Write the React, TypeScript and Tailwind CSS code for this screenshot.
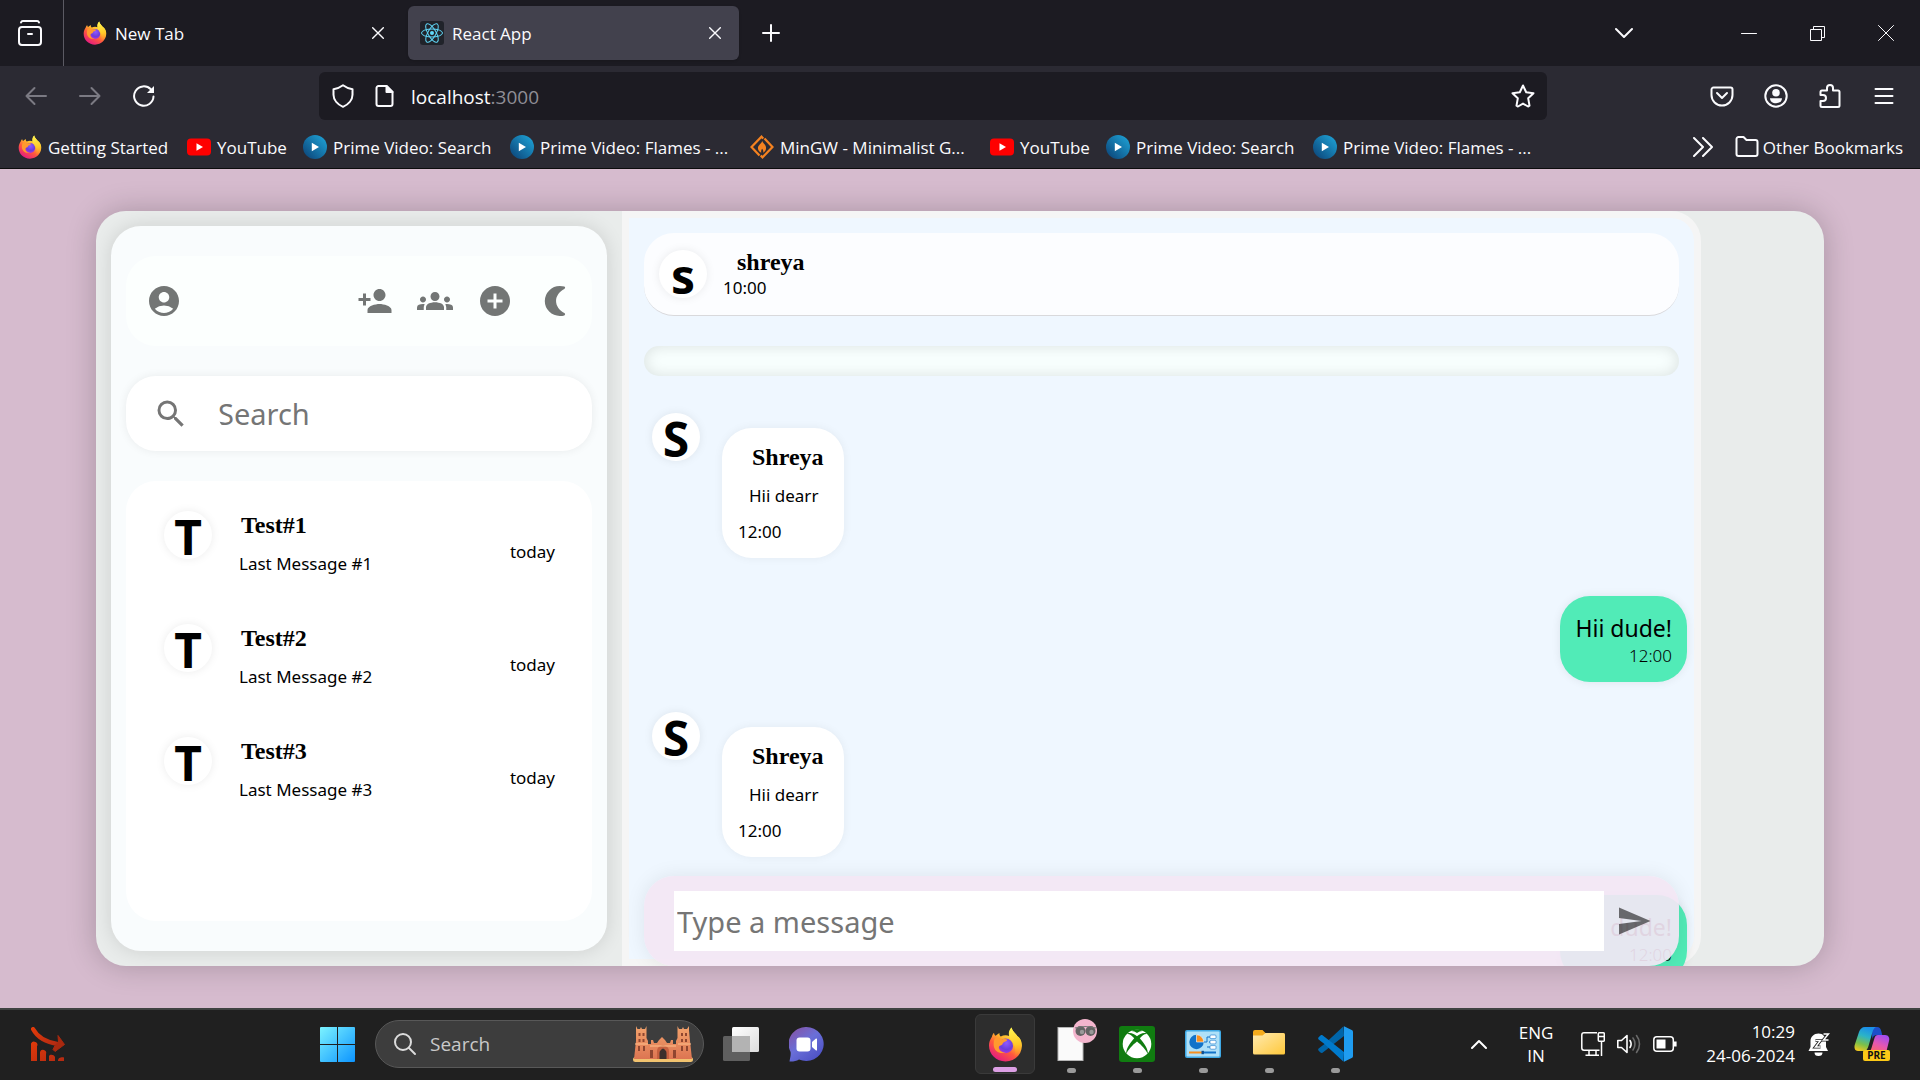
import type { ReactNode } from "react";
import { MdAccountCircle, MdAddCircle, MdGroups, MdPersonAdd, MdSearch, MdSend } from "react-icons/md";

/* ---------- Logos ---------- */

function FirefoxLogo({ id, className }: { id: string; className: string }) {
  return (
    <svg viewBox="0 0 32 32" className={className} aria-hidden="true">
      <defs>
        <linearGradient id={id + "b"} x1="0.8" y1="0.1" x2="0.25" y2="1">
          <stop offset="0" stopColor="#fff44f" />
          <stop offset="0.35" stopColor="#ffb62b" />
          <stop offset="0.6" stopColor="#ff5a3c" />
          <stop offset="1" stopColor="#e31587" />
        </linearGradient>
        <linearGradient id={id + "y"} x1="0.4" y1="0" x2="0.5" y2="1">
          <stop offset="0" stopColor="#fff44f" />
          <stop offset="0.6" stopColor="#ffc928" />
          <stop offset="1" stopColor="#ff7a2a" stopOpacity="0.2" />
        </linearGradient>
        <radialGradient id={id + "p"} cx="0.55" cy="0.3" r="0.75">
          <stop offset="0" stopColor="#9059ff" />
          <stop offset="0.6" stopColor="#6a3ddb" />
          <stop offset="1" stopColor="#b833e1" />
        </radialGradient>
      </defs>
      <path d="M3.6 8.8c.3-1.600 1-2.800 1.900-3.600.1 1.300.6 2 1.300 2.800 1-.9 2.200-1.500 3.700-2.600-.2 1.400.1 2.400 1.200 3.300 2.300-1.300 5.400-1.500 7.700-.4C18.500 5.200 19.300 2.600 21.600.5c.5 3.300 3.400 4.900 5.300 7.900 2.300.9 4.300 5 4.100 8.700C30.800 25.300 24.400 31.500 16 31.500S.9 25.200.9 17c0-3 .9-5.600 2.700-8.200z" fill={`url(#${id}b)`} />
      <path d="M21.600.5c.5 3.300 3.400 4.900 5.300 7.900 2.400 2 3.900 5.300 3.600 9.200-.6 4.600-3 7.700-6.800 9.600 1.800-3.600 1.700-8.600-.4-12.200-1.700-2.200-3.700-3.500-3.900-6.700-.1-3 .7-6 2.200-7.800z" fill={`url(#${id}y)`} />
      <circle cx="16.200" cy="17.300" r="6.700" fill={`url(#${id}p)`} />
      <path d="M6.300 10.500c2.200-.8 4.700-.5 6.300.9 1.600-.6 4.200-.6 5 .3-.3 1.300-1.800 1.700-3.400 2.400-.9.5-.7 1.700-1.700 2.300-1.300.7-2.200.5-2.700 2.200.3 3.100 3.100 5 6.400 4.500-4.900 2.300-10.600-1.100-11-6.300-.1-2.700.1-4.700 1.100-6.300z" fill="#ff9a2e" />
    </svg>
  );
}

function ReactLogo() {
  return (
    <svg viewBox="0 0 24 24" className="size-6 shrink-0" aria-hidden="true">
      <rect width="24" height="24" rx="3" fill="#20232a" />
      <g fill="none" stroke="#61dafb" strokeWidth="1">
        <ellipse cx="12" cy="12" rx="10.500" ry="4" />
        <ellipse cx="12" cy="12" rx="10.500" ry="4" transform="rotate(60 12 12)" />
        <ellipse cx="12" cy="12" rx="10.500" ry="4" transform="rotate(120 12 12)" />
      </g>
      <circle cx="12" cy="12" r="2" fill="#61dafb" />
    </svg>
  );
}

function YouTubeLogo() {
  return (
    <svg viewBox="0 0 24 24" className="size-6 shrink-0" aria-hidden="true">
      <rect y="3.500" width="24" height="17" rx="4" fill="#f00" />
      <path d="M9.500 8.200 16 12l-6.500 3.800z" fill="#fff" />
    </svg>
  );
}

function PrimeLogo({ id }: { id: string }) {
  return (
    <svg viewBox="0 0 24 24" className="size-6 shrink-0" aria-hidden="true">
      <defs>
        <linearGradient id={id} x1="1" y1="0" x2="0" y2="1">
          <stop offset="0" stopColor="#1fa8dc" />
          <stop offset="1" stopColor="#0b3f73" />
        </linearGradient>
      </defs>
      <circle cx="12" cy="12" r="12" fill={`url(#${id})`} />
      <path d="M8.800 7.800 16 12l-7.200 4.200z" fill="#fff" />
    </svg>
  );
}

function MinGWLogo() {
  return (
    <svg viewBox="0 0 24 24" className="size-6 shrink-0" fill="none" aria-hidden="true">
      <path d="M9.500 20.600 1.500 12 11.500 1.700l1.800 1.900" stroke="#f58220" strokeWidth="2.200" />
      <path d="M14.500 3.400 22.500 12 12.500 22.300l-1.800-1.900" stroke="#f58220" strokeWidth="2.200" />
      <path d="M12.200 5.800c.4 2.200 3.900 4 3.900 7.200 0 2.400-1.600 4-3 4.700.5-1.600.1-2.800-1-4-.9 1.200-1.200 2.500-.8 4-1.800-.6-3.400-2.300-3.400-4.600 0-3.200 3.900-4.300 4.300-7.300z" fill="#f58220" />
    </svg>
  );
}

/* ---------- Line icons ---------- */

function Line({ className, box = 24, width = 2, children }: { className: string; box?: number; width?: number; children: ReactNode }) {
  return (
    <svg viewBox={`0 0 ${box} ${box}`} className={className} fill="none" stroke="currentColor" strokeWidth={width} strokeLinecap="round" strokeLinejoin="round" aria-hidden="true">
      {children}
    </svg>
  );
}

function MoonIcon() {
  return (
    <svg viewBox="0 0 24 24" className="size-9" fill="currentColor" aria-hidden="true">
      <path d="M15.200 2a10 10 0 1 0 0 20c1.200 0 2.200-.1 3-.4.8-.4.700-1.200 0-1.600-3.200-1.700-5.500-4.600-5.500-8s2.300-6.300 5.500-8c.7-.4.800-1.200 0-1.600-.8-.3-1.800-.4-3-.4z" />
    </svg>
  );
}

/* ---------- Browser chrome ---------- */

function Tab({ icon, title, active }: { icon: ReactNode; title: string; active?: boolean }) {
  return (
    <div className={active ? "flex h-[54px] w-[331px] items-center rounded-md bg-[#42414d] px-3 shadow" : "flex h-[54px] w-[331px] items-center px-3"}>
      {icon}
      <span className="ml-2 flex-1 pt-px text-[17px]">{title}</span>
      <button aria-label={`Close ${title}`} className="flex size-6 items-center justify-center">
        <Line className="size-3" box={12} width={1.4}><path d="m.7.7 10.600 10.600M11.300.7.7 11.300" /></Line>
      </button>
    </div>
  );
}

function TabBar() {
  return (
    <div className="flex h-[66px] items-center bg-[#1c1b22]">
      <button aria-label="Recent browsing" className="flex h-full w-16 items-center justify-center border-r border-[#5b5a63] pr-1">
        <Line className="size-7" box={28} width={2}>
          <path d="M5 3.500a2 2 0 0 1 2-1.500h14a2 2 0 0 1 2 1.500" />
          <rect x="3" y="8" width="22" height="18" rx="3" />
          <path d="M12 15h4" />
        </Line>
      </button>
      <div className="ml-[7px] flex gap-1.5">
        <Tab icon={<FirefoxLogo id="fxTab" className="size-6" />} title="New Tab" />
        <Tab icon={<ReactLogo />} title="React App" active />
      </div>
      <button aria-label="Open a new tab" className="ml-[22px] p-px">
        <Line className="size-[18px]" box={18} width={2}><path d="M9 1v16M1 9h16" /></Line>
      </button>
      <div className="ml-auto flex items-center">
        <button aria-label="List all tabs" className="mr-[108px]">
          <Line className="size-[18px]" box={18} width={2}><path d="m1 5 8 8 8-8" /></Line>
        </button>
        <button aria-label="Minimize" className="flex w-[69px] justify-start">
          <Line className="size-4" box={16} width={1}><path d="M.5 8.500h15" /></Line>
        </button>
        <button aria-label="Restore" className="flex w-[68px] justify-start">
          <svg viewBox="0 0 15 15" className="size-[15px]" fill="none" stroke="currentColor" aria-hidden="true">
            <path d="M.5 3.500h11v11H.5zM3.500 3.500v-3h11v11h-3" />
          </svg>
        </button>
        <button aria-label="Close window" className="mr-[26px]">
          <Line className="size-4" box={16} width={1}><path d="m.5.5 15 15m0-15-15 15" /></Line>
        </button>
      </div>
    </div>
  );
}

function NavBar() {
  return (
    <div className="flex h-[60px] items-center">
      <div className="flex w-[319px] shrink-0 items-center gap-[30px] pl-6">
        <button aria-label="Back" className="text-[#7b7a83]">
          <Line className="size-6"><path d="M22 12H2.500M10.500 4l-8 8 8 8" /></Line>
        </button>
        <button aria-label="Forward" className="text-[#7b7a83]">
          <Line className="size-6"><path d="M2 12h19.500M13.500 4l8 8-8 8" /></Line>
        </button>
        <button aria-label="Reload">
          <Line className="size-6">
            <path d="M21.500 12.500A9.700 9.700 0 1 1 18.800 5.300" />
            <path d="M22 2v7h-7z" fill="currentColor" stroke="none" />
          </Line>
        </button>
      </div>
      <div className="flex h-12 flex-1 items-center rounded-md bg-[#1c1b22] px-3">
        <Line className="size-6 shrink-0"><path d="M12 1.200c3.500 2.600 6.300 3.500 9.500 4v5.600c0 5.200-4.200 9.800-9.500 12-5.300-2.200-9.500-6.800-9.500-12V5.200c3.200-.5 6-1.400 9.500-4z" /></Line>
        <Line className="ml-[18px] size-6 shrink-0">
          <path d="M5.500 2h8l6 6v12a2 2 0 0 1-2 2h-12a2 2 0 0 1-2-2V4a2 2 0 0 1 2-2z" />
          <path d="M13.500 2v6h6z" fill="currentColor" />
        </Line>
        <label className="relative ml-[14px] flex-1 text-[19px]">
          <span className="pointer-events-none absolute inset-y-0 left-0 flex items-center pt-0.5">
            <span>localhost</span>
            <span className="text-[#8f8e96]">:3000</span>
          </span>
          <input aria-label="Address" defaultValue="" className="block w-full bg-transparent outline-none" />
        </label>
        <button aria-label="Bookmark this page">
          <Line className="size-6"><path d="m12 1.500 3.200 6.700 7.300 1-5.300 5.100 1.300 7.400-1.500.8-5-2.900-5 2.900-1.500-.8 1.300-7.400-5.300-5.100 7.300-1z" /></Line>
        </button>
      </div>
      <div className="flex w-[373px] shrink-0 items-center justify-end gap-[30px] pr-6">
        <button aria-label="Save to Pocket">
          <Line className="size-6"><path d="M3.500 3.500h17a2 2 0 0 1 2 2V11a10.500 10.500 0 0 1-21 0V5.500a2 2 0 0 1 2-2z" /><path d="m7 9 5 5 5-5" /></Line>
        </button>
        <button aria-label="Account">
          <Line className="size-6">
            <circle cx="12" cy="12" r="10.700" />
            <circle cx="12" cy="8.800" r="3.800" fill="currentColor" stroke="none" />
            <path d="M6 14.200h12c0 3-2.500 5-6 5s-6-2-6-5z" fill="currentColor" stroke="none" />
          </Line>
        </button>
        <button aria-label="Extensions">
          <Line className="size-6"><path d="M4 23a1.500 1.500 0 0 1-1.500-1.500V17H5a3 3 0 0 0 0-6H2.500V8A1.500 1.500 0 0 1 4 6.500h5V4a3 3 0 0 1 6 0v2.500h5A1.500 1.500 0 0 1 21.500 8v13.500A1.500 1.500 0 0 1 20 23z" /></Line>
        </button>
        <button aria-label="Open application menu">
          <Line className="size-6"><path d="M3.500 5h17M3.500 12h17M3.500 19h17" /></Line>
        </button>
      </div>
    </div>
  );
}

const bookmarks = [
  { icon: <FirefoxLogo id="fxBm" className="size-6 shrink-0" />, label: "Getting Started", width: "w-[169px]" },
  { icon: <YouTubeLogo />, label: "YouTube", width: "w-[116px]" },
  { icon: <PrimeLogo id="pv1" />, label: "Prime Video: Search", width: "w-[207px]" },
  { icon: <PrimeLogo id="pv2" />, label: "Prime Video: Flames - ...", width: "w-[240px]" },
  { icon: <MinGWLogo />, label: "MinGW - Minimalist G...", width: "w-[240px]" },
  { icon: <YouTubeLogo />, label: "YouTube", width: "w-[116px]" },
  { icon: <PrimeLogo id="pv3" />, label: "Prime Video: Search", width: "w-[207px]" },
  { icon: <PrimeLogo id="pv4" />, label: "Prime Video: Flames - ...", width: "w-[240px]" },
];

function BookmarkBar() {
  return (
    <nav aria-label="Bookmarks" className="flex h-[43px] items-center border-b border-[#0c0c0d] pl-[18px] text-[17px] whitespace-nowrap">
      {bookmarks.map((b, i) => (
        <a key={i} href="#" className={`flex shrink-0 items-center gap-1.5 ${b.width}`}>
          {b.icon}
          <span className="pt-px">{b.label}</span>
        </a>
      ))}
      <button aria-label="More bookmarks" className="ml-auto">
        <Line className="size-5" box={20} width={2}><path d="m1 1 9 9-9 9M10 1l9 9-9 9" /></Line>
      </button>
      <a href="#" className="ml-[22px] flex items-center gap-1 pr-[17px]">
        <Line className="size-6"><path d="M3.500 2h5l3 3h9a2 2 0 0 1 2 2v12a2 2 0 0 1-2 2h-17a2 2 0 0 1-2-2V4a2 2 0 0 1 2-2z" /></Line>
        <span className="pt-px">Other Bookmarks</span>
      </a>
    </nav>
  );
}

/* ---------- Chat application ---------- */

function Avatar({ letter }: { letter: string }) {
  return (
    <div className="size-12 shrink-0 rounded-full bg-white text-center text-[48px] leading-[51px] font-bold shadow-[0_0_10px_rgba(0,0,0,0.08)]">
      {letter}
    </div>
  );
}

function IconButton({ label, children }: { label: string; children: ReactNode }) {
  return (
    <button aria-label={label} className="flex size-[60px] items-center justify-center rounded-full">
      {children}
    </button>
  );
}

const conversations = [
  { name: "Test#1", last: "Last Message #1", when: "today" },
  { name: "Test#2", last: "Last Message #2", when: "today" },
  { name: "Test#3", last: "Last Message #3", when: "today" },
];

function Sidebar() {
  return (
    <aside className="m-[15px] flex w-[496px] shrink-0 flex-col gap-[30px] rounded-[30px] bg-[#f9fcfd] px-[15px] py-[30px] shadow-[0_0_20px_rgba(0,0,0,0.12)]">
      <div className="flex justify-between rounded-[30px] bg-[#fcfffe] py-[15px] pr-[7px] pl-2 text-[#737675]">
        <IconButton label="Account"><MdAccountCircle className="size-9" /></IconButton>
        <div className="flex">
          <IconButton label="Add person"><MdPersonAdd className="size-9" /></IconButton>
          <IconButton label="Create group"><MdGroups className="size-9" /></IconButton>
          <IconButton label="New chat"><MdAddCircle className="size-9" /></IconButton>
          <IconButton label="Dark mode"><MoonIcon /></IconButton>
        </div>
      </div>
      <label className="flex h-[75px] items-center rounded-[30px] bg-white pl-[27px] shadow-[0_0_10px_rgba(0,0,0,0.07)]">
        <MdSearch className="size-9 shrink-0 text-[#757575]" />
        <input aria-label="Search" placeholder="Search" className="ml-[29px] w-full min-w-0 rounded-[30px] text-[29px] outline-none placeholder:text-[#757575]" />
      </label>
      <ul className="flex-1 rounded-[30px] bg-white pt-[30px] pr-[37px] pl-[38px]">
        {conversations.map((c) => (
          <li key={c.name} className="flex h-[113px]">
            <Avatar letter={c.name[0]} />
            <div className="ml-[27px] flex-1">
              <div className="ml-0.5 font-[Liberation_Serif] text-2xl leading-7 font-bold">{c.name}</div>
              <div className="mt-[13px] text-[17px] leading-6">{c.last}</div>
            </div>
            <div className="mt-[29px] text-[17px] leading-6">{c.when}</div>
          </li>
        ))}
      </ul>
    </aside>
  );
}

function Received() {
  return (
    <div className="mt-[30px] flex gap-[22px]">
      <Avatar letter="S" />
      <div className="mt-[15px] h-[130px] rounded-[30px] bg-white pt-[15px] pr-5 pl-4 shadow-[0_0_10px_rgba(0,0,0,0.06)]">
        <div className="pl-[14px] font-[Liberation_Serif] text-2xl leading-7 font-bold">Shreya</div>
        <div className="mt-[13px] pl-[11px] text-[17px] leading-6">Hii dearr</div>
        <div className="mt-3 text-[17px] leading-6">12:00</div>
      </div>
    </div>
  );
}

function Sent() {
  return (
    <div className="mt-[38px] ml-auto h-[86px] w-fit rounded-[30px] bg-[#51ebb7] px-[15px] pt-4 text-right shadow-[0_0_10px_rgba(0,0,0,0.08)]">
      <div className="text-[23px] leading-8">Hii dude!</div>
      <div className="text-[17px] leading-6 font-light">12:00</div>
    </div>
  );
}

function ChatArea() {
  return (
    <section className="relative min-w-0 flex-1 rounded-r-[30px] border-[7px] border-[#f5f5f5] bg-[#eff7ff]">
      <header className="mx-[15px] mt-[15px] flex h-[83px] items-center gap-4 rounded-[30px] border-b border-[#d9d9dc] bg-[#fcfdff] px-[15px]">
        <Avatar letter="s" />
        <div>
          <div className="pl-[14px] font-[Liberation_Serif] text-2xl leading-7 font-bold">shreya</div>
          <div className="text-[17px] leading-6">10:00</div>
        </div>
      </header>
      <div className="mx-[15px] mt-[30px] h-[30px] rounded-[15px] bg-[#f8fffe] shadow-[inset_0_0_15px_rgba(0,0,0,0.12)]" />
      <div className="flex flex-col pt-[7px] pr-[7px] pl-[23px]">
        <Received />
        <Sent />
        <Received />
        <Sent />
      </div>
      <form className="absolute inset-x-[15px] -bottom-[7px] flex h-[90px] items-center rounded-[30px] bg-[#f3e6f4]/92 pr-[15px] pl-[30px] shadow-[0_0_20px_rgba(0,0,0,0.08)]" onSubmit={(e) => e.preventDefault()}>
        <input aria-label="Type a message" placeholder="Type a message" className="h-[60px] min-w-0 flex-1 bg-white px-[3px] text-[29px] outline-none placeholder:text-[#757575]" />
        <button aria-label="Send" className="flex size-[60px] items-center justify-center text-black/55">
          <MdSend className="size-9" />
        </button>
      </form>
    </section>
  );
}

function ChatWindow() {
  return (
    <main className="flex min-h-0 flex-1 flex-col bg-[#d6bbce] px-[5%] py-[42px] font-['Noto_Sans',sans-serif] text-black">
      <div className="flex min-h-0 flex-1 overflow-hidden rounded-[30px] bg-[#e9eceb] pr-[123px] shadow-[0_0_30px_rgba(0,0,0,0.22)]">
        <Sidebar />
        <ChatArea />
      </div>
    </main>
  );
}

/* ---------- Taskbar ---------- */

function TrendIcon() {
  return (
    <svg viewBox="0 0 34 34" className="size-[34px]" aria-hidden="true">
      <defs>
        <linearGradient id="trend" x1="0" y1="0" x2="1" y2="1">
          <stop offset="0" stopColor="#e03a0a" />
          <stop offset="1" stopColor="#b32a12" />
        </linearGradient>
      </defs>
      <path d="M2 2C6 9.500 13 15 27 17" stroke="url(#trend)" strokeWidth="4.200" fill="none" strokeLinecap="round" />
      <path d="M27 8.500 33.500 17.500 24 24.500 22 22.500 24 18.500 27.500 15z" fill="#a9290f" stroke="#a9290f" strokeLinejoin="round" />
      <path d="M0 16.500a3 3 0 0 1 6 3V34H0zM9 25a3 3 0 0 1 6 2v7H9zM18 29c1-2 5-1.500 6 1v4h-6zM27 34c0-3.500 3.500-4 6-3.500V34z" fill="url(#trend)" />
    </svg>
  );
}

function WindowsIcon() {
  return (
    <svg viewBox="0 0 35 35" className="size-[35px]" aria-hidden="true">
      <defs>
        <linearGradient id="win" gradientUnits="userSpaceOnUse" x1="0" y1="0" x2="35" y2="35">
          <stop offset="0" stopColor="#7cf3ff" />
          <stop offset="1" stopColor="#0c94ff" />
        </linearGradient>
      </defs>
      <path d="M1 0h16v17H0V1a1 1 0 0 1 1-1zM18 0h16a1 1 0 0 1 1 1v16H18zM0 18h17v17H1a1 1 0 0 1-1-1zM18 18h17v16a1 1 0 0 1-1 1H18z" fill="url(#win)" />
    </svg>
  );
}

function CastleIcon() {
  return (
    <svg viewBox="0 0 60 36" className="h-9 w-[60px]" aria-hidden="true">
      <defs>
        <linearGradient id="castle" x1="0" y1="0" x2="0" y2="1">
          <stop offset="0" stopColor="#f3a36c" />
          <stop offset="1" stopColor="#dd7552" />
        </linearGradient>
      </defs>
      <rect y="31" width="60" height="5" rx="2.500" fill="#f2c36f" />
      <path d="M3 4V0l1.500 3H7l1-2 1 2h3l1.500-3v12l1.500 3v3h3v-4h2l1 3h3l2-3 3-3 3 3 2 3h3l1-3h2v4h3v-3l1.500-3V0L46 3h3l1-2 1 2h3l2-3v4l1 11 2 18H1L3 15z" fill="url(#castle)" />
      <path d="M24 33V25c0-3 2-5 6-6 4 1 6 3 6 6v8z" fill="#c5603f" />
      <path d="M26.500 33v-6c0-2 1.500-3.500 3.500-4.500 2 1 3.500 2.500 3.500 4.500v6z" fill="#3a302c" />
      <path d="M5.500 7h2v3h-2zM9.500 7h2v3h-2zM5.500 13h2v3h-2zM9.500 13h2v3h-2zM5 20h2v5H5zM10 20h2v5h-2zM48 7h2v3h-2zM52 7h2v3h-2zM48 13h2v3h-2zM52 13h2v3h-2zM48 20h2v5h-2zM53 20h2v5h-2zM17 24h3v8h-3zM40 24h3v8h-3z" fill="#8f4630" />
      <path d="M2 18h13M45 18h13M17 20h26" stroke="#ffc08c" strokeWidth="1" />
    </svg>
  );
}

function TaskViewIcon() {
  return (
    <svg viewBox="0 0 36 34" className="h-[34px] w-9" aria-hidden="true">
      <defs>
        <linearGradient id="tv" x1="0" y1="0" x2="1" y2="1"><stop offset="0" stopColor="#fff" /><stop offset="1" stopColor="#dcdcdc" /></linearGradient>
      </defs>
      <rect y="9" width="27" height="25" rx="1.500" fill="#5f5f5f" />
      <rect x="9" width="27" height="25" rx="1.500" fill="url(#tv)" />
      <path d="M9 9h18v16H10.500A1.500 1.500 0 0 1 9 23.500z" fill="#b3b3b3" />
    </svg>
  );
}

function VideoChatIcon() {
  return (
    <svg viewBox="0 0 35 35" className="size-[35px]" aria-hidden="true">
      <defs>
        <linearGradient id="vc" x1="0" y1="0" x2="0.8" y2="1">
          <stop offset="0" stopColor="#8a4f9e" />
          <stop offset="0.5" stopColor="#6a6fd8" />
          <stop offset="1" stopColor="#4b4fc4" />
        </linearGradient>
      </defs>
      <path d="M17.500 0a17.500 17 0 1 1-7.500 32.500c-3 1.600-6 2.300-9.500 2C1 31 2 29 1.600 25A17.500 17 0 0 1 17.500 0z" fill="url(#vc)" />
      <rect x="7.500" y="10.500" width="14" height="14" rx="3" fill="#fff" />
      <path d="m23 15 4-3.500c.5-.3 1 0 1 .6v10.800c0 .6-.5.900-1 .6L23 20z" fill="#fff" />
    </svg>
  );
}

function DocumentIcon() {
  return (
    <svg viewBox="0 0 54 60" className="h-[60px] w-[54px]" aria-hidden="true">
      <rect x="14" y="13.500" width="25" height="33" fill="#fafafa" stroke="#b5b5b5" strokeWidth="1" />
      <circle cx="41" cy="17" r="12" fill="#f3b5cd" />
      <circle cx="36.500" cy="17" r="5" fill="#636363" />
      <circle cx="46.500" cy="17" r="5" fill="#636363" />
      <path d="M31 14q10-3 21 0" stroke="#777" strokeWidth="1.200" fill="none" />
      <circle cx="38" cy="18" r="2.200" fill="#999" />
      <circle cx="47.500" cy="18" r="2.200" fill="#999" />
    </svg>
  );
}

function XboxIcon() {
  return (
    <svg viewBox="0 0 36 36" className="size-9" aria-hidden="true">
      <rect width="36" height="36" rx="3" fill="#107c10" />
      <circle cx="18" cy="18" r="14.300" fill="#fff" />
      <path d="M7.500 8.200C10 5.500 15 7.500 18 10.200c3-2.700 8-4.700 10.500-2C26.500 7 23 9.500 20.800 12.200c4.500 5 8.500 11 8 15.800C27 24 22.500 19 18 15.500 13.500 19 9 24 7.200 28c-.5-4.800 3.500-10.800 8-15.800C13 9.500 9.500 7 7.500 8.200z" fill="#107c10" />
      <path d="M11.500 5.200C13.500 4.600 16 5.800 18 7c2-1.200 4.500-2.400 6.500-1.800A14.300 14.300 0 0 0 11.500 5.200z" fill="#107c10" />
    </svg>
  );
}

function ControlPanelIcon() {
  return (
    <svg viewBox="0 0 36 28" className="h-7 w-9" aria-hidden="true">
      <rect width="36" height="28" rx="2" fill="#3fa9e5" />
      <rect x="1.500" y="1.500" width="33" height="25" rx="1" fill="#aee0f8" />
      <circle cx="11.500" cy="12" r="7.200" fill="#1273c9" />
      <path d="M11.500 12V4.800a7.200 7.200 0 0 1 7.200 7.200z" fill="#f78f1e" stroke="#fff" strokeWidth="0.600" />
      <path d="M19 12h3V7h3M25 12h-1M22 17h3" stroke="#1273c9" strokeWidth="1" fill="none" />
      <rect x="25" y="5" width="6" height="3.600" rx="1" fill="#fff" stroke="#1273c9" strokeWidth="0.600" />
      <rect x="25" y="10.300" width="6" height="3.600" rx="1" fill="#fff" stroke="#1273c9" strokeWidth="0.600" />
      <rect x="25" y="15.600" width="6" height="3.600" rx="1" fill="#fff" stroke="#1273c9" strokeWidth="0.600" />
      <path d="M4 22.500h13" stroke="#f78f1e" strokeWidth="2" />
      <path d="M17 22.500h14" stroke="#1273c9" strokeWidth="2" />
      <rect x="16.500" y="20.800" width="2.400" height="3.400" fill="#0b4f94" />
    </svg>
  );
}

function FolderIcon() {
  return (
    <svg viewBox="0 0 32 25" className="mb-1 h-[25px] w-8" aria-hidden="true">
      <defs>
        <linearGradient id="fold" x1="0" y1="0" x2="1" y2="1"><stop offset="0" stopColor="#ffeab0" /><stop offset="1" stopColor="#ffc83a" /></linearGradient>
      </defs>
      <path d="M0 2a2 2 0 0 1 2-2h7.500l3 3H30a2 2 0 0 1 2 2v8H0z" fill="#f5ab1c" />
      <path d="M0 5.500h9.500l3-2.500H30a2 2 0 0 1 2 2v18a1.500 1.500 0 0 1-1.500 1.500h-29A1.500 1.500 0 0 1 0 23z" fill="url(#fold)" />
    </svg>
  );
}

function CodeIcon() {
  return (
    <svg viewBox="0 0 36 36" className="size-9" aria-hidden="true">
      <path d="M26.500.3 7.500 18 1.600 22.600a1.500 1.500 0 0 0 0 2.100l1.900 1.900c.6.500 1.300.5 2 .1L27 10z" fill="#0065a9" />
      <path d="M26.500 35.700 7.500 18 1.600 13.400a1.500 1.500 0 0 1 0-2.100l1.900-1.900c.6-.5 1.300-.5 2-.1L27 26z" fill="#007acc" />
      <path d="M27 .2 34.700 4c.8.4 1.300 1.200 1.300 2v24c0 .8-.5 1.600-1.300 2L27 35.800z" fill="#1f9cf0" />
    </svg>
  );
}

function TaskButton({ label, active, children }: { label: string; active?: boolean; children: ReactNode }) {
  return (
    <button
      aria-label={label}
      className={active ? "relative flex size-[60px] items-center justify-center rounded-md border border-[#3a3a3a] bg-[#2d2d2d]" : "relative flex size-[60px] items-center justify-center"}
    >
      {children}
      <span className={active ? "absolute bottom-px h-[5px] w-6 rounded-full bg-[#dc9fe4]" : "absolute bottom-px h-[5px] w-[9px] rounded-full bg-[#9a9a9a]"} />
    </button>
  );
}

function CopilotIcon() {
  return (
    <svg viewBox="0 0 36 36" className="size-9" aria-hidden="true">
      <defs>
        <linearGradient id="cpa" x1="0.5" y1="0" x2="0.2" y2="1">
          <stop offset="0" stopColor="#1b8fe8" /><stop offset="0.35" stopColor="#2bb3c8" /><stop offset="0.7" stopColor="#7cc04a" /><stop offset="1" stopColor="#f3c81e" />
        </linearGradient>
        <linearGradient id="cpb" x1="0.7" y1="0" x2="0.2" y2="1">
          <stop offset="0" stopColor="#a24df0" /><stop offset="0.5" stopColor="#e657b0" /><stop offset="1" stopColor="#ff6a5a" />
        </linearGradient>
      </defs>
      <path d="M18 1h5c2.500 0 3.500 1.500 4.200 4l1 4h-5c-3 0-4 1-5 4z" fill="#1d4fc9" />
      <path d="M11 1h11c-2 1-2.700 2.500-3.500 5l-4 14c-1 3-2 5-5 5H4c-3 0-4-3-3.300-6L5 6c1-3 3-5 6-5z" fill="url(#cpa)" />
      <path d="M24 9h7c3.500 0 5 3 4 6l-3 12H14c2-1 2.700-3 3.500-5l3-10c.6-2 1.700-3 3.500-3z" fill="url(#cpb)" />
      <rect x="9" y="24" width="27" height="11" rx="2" fill="#fcc917" />
      <text x="22.500" y="33" textAnchor="middle" fontSize="10" fontWeight="bold" fontFamily="Noto Sans, sans-serif" fill="#111">PRE</text>
    </svg>
  );
}

function Taskbar() {
  return (
    <footer className="flex h-[72px] shrink-0 items-center border-t-2 border-[#3f4241] bg-[#202020] pb-0.5 font-['Open_Sans',sans-serif] text-[17px] text-white">
      <button aria-label="Widgets" className="ml-[31px]"><TrendIcon /></button>
      <div className="ml-[255px] flex items-center">
        <button aria-label="Start"><WindowsIcon /></button>
        <label className="ml-5 flex h-12 w-[329px] items-center rounded-full border border-[#585858] bg-[#3d3d3d] pr-2.5 pl-[17px]">
          <Line className="size-6 shrink-0 text-[#dcdcdc]" width={2}><circle cx="10" cy="10" r="8" /><path d="m16 16 6 6" /></Line>
          <input aria-label="Search Windows" placeholder="Search" className="ml-[13px] min-w-0 flex-1 text-[19px] outline-none placeholder:text-[#c9c9c9]" />
          <CastleIcon />
        </label>
        <button aria-label="Task view" className="ml-[19px]"><TaskViewIcon /></button>
        <button aria-label="Chat" className="ml-[30px]"><VideoChatIcon /></button>
      </div>
      <div className="ml-[151px] flex items-center gap-1.5">
        <TaskButton label="Firefox" active><FirefoxLogo id="fxTask" className="size-[35px]" /></TaskButton>
        <TaskButton label="Documents"><DocumentIcon /></TaskButton>
        <TaskButton label="Xbox"><XboxIcon /></TaskButton>
        <TaskButton label="Control Panel"><ControlPanelIcon /></TaskButton>
        <TaskButton label="File Explorer"><FolderIcon /></TaskButton>
        <TaskButton label="Visual Studio Code"><CodeIcon /></TaskButton>
      </div>
      <div className="ml-auto flex items-center pr-[30px]">
        <button aria-label="Show hidden icons"><Line className="size-4" box={16} width={2}><path d="m1 12 7-7 7 7" /></Line></button>
        <button className="ml-[31px] w-9 text-center leading-[23px]">ENG<br />IN</button>
        <button aria-label="Network, volume and battery" className="ml-[27px] flex items-center gap-3">
          <svg viewBox="0 0 24 24" className="size-6" fill="none" stroke="currentColor" strokeWidth="1.500" aria-hidden="true">
            <path d="M16 .8H3A2.200 2.200 0 0 0 .8 3v13A2.200 2.200 0 0 0 3 18.200h15.500M8 18v5M15 18v5M4.500 23.200h13.500" />
            <rect x="17.300" y=".8" width="6" height="8.500" rx="1" />
            <path d="M17.300 4.500h6M20.500 9.500V24" />
          </svg>
          <svg viewBox="0 0 24 24" className="size-6" fill="none" stroke="currentColor" strokeWidth="1.600" strokeLinecap="round" strokeLinejoin="round" aria-hidden="true">
            <path d="M.8 8.500h3.700L10 3.500v17l-5.500-5H.8zM13 8.500c1.300 2 1.300 5 0 7" />
            <path d="M16 6c2.600 3.500 2.600 8.500 0 12M19.500 3.500c4 5 4 12 0 17" stroke="#6a6a6a" />
          </svg>
          <svg viewBox="0 0 24 24" className="size-6" fill="none" stroke="currentColor" strokeWidth="1.500" aria-hidden="true">
            <rect x=".8" y="4.800" width="19.500" height="14.400" rx="3" />
            <path d="M3.500 7.500h9v9h-9z" fill="currentColor" stroke="none" />
            <path d="M22.300 9.500v5" strokeWidth="2.600" />
          </svg>
        </button>
        <button className="ml-3 w-[106px] text-right leading-6 whitespace-nowrap">10:29<br />24-06-2024</button>
        <button aria-label="Notifications" className="ml-[13px]">
          <svg viewBox="0 0 22 24" className="h-6 w-[22px]" fill="currentColor" aria-hidden="true">
            <path d="M10.500 1.500c4.500 0 7.500 3.300 7.500 7.500v6l2 4H.5l2-4V9c0-4.200 3.500-7.500 8-7.500zM6.500 20.500h8a4 3.500 0 0 1-8 0z" />
            <path d="M7.500 8.500h5l-5 6.500h5M15.500 2h5l-5 6h5" stroke="#202020" strokeWidth="3.200" fill="none" />
            <path d="M7.500 8.500h5l-5 6.500h5M15.500 2h5l-5 6h5" stroke="currentColor" strokeWidth="1.500" fill="none" />
          </svg>
        </button>
        <button aria-label="Copilot" className="ml-6"><CopilotIcon /></button>
      </div>
    </footer>
  );
}

export default function App() {
  return (
    <div className="flex h-screen min-w-[1280px] flex-col overflow-hidden">
      <div className="shrink-0 bg-[#2b2a33] font-['Open_Sans',sans-serif] text-[#fbfbfe]">
        <TabBar />
        <NavBar />
        <BookmarkBar />
      </div>
      <ChatWindow />
      <Taskbar />
    </div>
  );
}
